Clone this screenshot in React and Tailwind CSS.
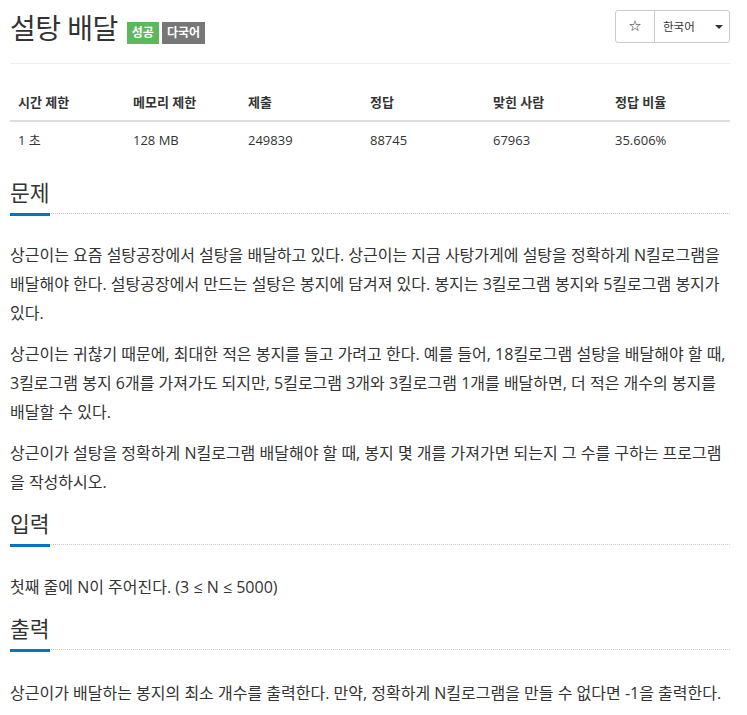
const stats = [
  { label: "시간 제한", value: "1 초" },
  { label: "메모리 제한", value: "128 MB" },
  { label: "제출", value: "249839" },
  { label: "정답", value: "88745" },
  { label: "맞힌 사람", value: "67963" },
  { label: "정답 비율", value: "35.606%" },
];

function Headline({ children }) {
  return (
    <div className="border-b border-dotted border-[#ccc]">
      <h2 className="inline-block text-[21.5px] leading-[30px] pb-[5px] -mb-[3px] border-b-[3px] border-[#0076c0]">
        {children}
      </h2>
    </div>
  );
}

function Lines({ lines }) {
  return (
    <p className="mb-[12px] whitespace-nowrap">
      {lines.map((line, i) => (
        <span key={i}>
          {line}
          {i < lines.length - 1 && <br />}
        </span>
      ))}
    </p>
  );
}

export default function App() {
  return (
    <div className="bg-white min-h-[715px] pl-[10px] pr-[17px] text-[#333] font-['Open_Sans','Noto_Sans_CJK_KR',sans-serif]">
      {/* Page header */}
      <div className="flex justify-between items-start pt-[10px] h-[64px] border-b border-[#eee]">
        <h1 className="flex items-end">
          <span className="text-[28px] leading-[36px] tracking-[-0.5px]">설탕 배달</span>
          <span className="ml-[9px] mb-[2px] h-[22px] px-[5px] flex items-center bg-[#5cb85c] text-white text-[12px] font-bold">
            성공
          </span>
          <span className="ml-[3px] mb-[2px] h-[22px] px-[5px] flex items-center bg-[#777] text-white text-[12px] font-bold">
            다국어
          </span>
        </h1>
        <div className="flex h-[33px] border border-[#ccc] rounded-[3px]">
          <button className="w-[38px] flex items-center justify-center text-[15px] text-[#222] font-['DejaVu_Sans',sans-serif]">
            ☆
          </button>
          <button className="w-[75px] flex items-center border-l border-[#ccc] pl-[8px] text-[11.5px]">
            한국어
            <span className="ml-[20px] w-0 h-0 border-t-[4px] border-t-[#333] border-x-[4px] border-x-transparent" />
          </button>
        </div>
      </div>

      {/* Stats table */}
      <div className="mt-[20px] mb-[20px]">
        <div className="grid grid-cols-[115px_115px_122px_123px_122px_1fr] border-b-2 border-[#ddd]">
          {stats.map((s) => (
            <div key={s.label} className="px-2 py-2 leading-5 text-[13px] font-bold">
              {s.label}
            </div>
          ))}
        </div>
        <div className="grid grid-cols-[115px_115px_122px_123px_122px_1fr]">
          {stats.map((s) => (
            <div key={s.label} className="px-2 py-2 leading-5 text-[13px]">
              {s.value}
            </div>
          ))}
        </div>
      </div>

      {/* 문제 */}
      <section>
        <Headline>문제</Headline>
        <div className="mt-[27px] text-[16px] leading-[29px]">
          <Lines
            lines={[
              "상근이는 요즘 설탕공장에서 설탕을 배달하고 있다. 상근이는 지금 사탕가게에 설탕을 정확하게 N킬로그램을",
              "배달해야 한다. 설탕공장에서 만드는 설탕은 봉지에 담겨져 있다. 봉지는 3킬로그램 봉지와 5킬로그램 봉지가",
              "있다.",
            ]}
          />
          <Lines
            lines={[
              "상근이는 귀찮기 때문에, 최대한 적은 봉지를 들고 가려고 한다. 예를 들어, 18킬로그램 설탕을 배달해야 할 때,",
              "3킬로그램 봉지 6개를 가져가도 되지만, 5킬로그램 3개와 3킬로그램 1개를 배달하면, 더 적은 개수의 봉지를",
              "배달할 수 있다.",
            ]}
          />
          <Lines
            lines={[
              "상근이가 설탕을 정확하게 N킬로그램 배달해야 할 때, 봉지 몇 개를 가져가면 되는지 그 수를 구하는 프로그램",
              "을 작성하시오.",
            ]}
          />
        </div>
      </section>

      {/* 입력 */}
      <section className="mt-[2px]">
        <Headline>입력</Headline>
        <div className="mt-[28px] text-[16px] leading-[29px]">
          <Lines lines={["첫째 줄에 N이 주어진다. (3 ≤ N ≤ 5000)"]} />
        </div>
      </section>

      {/* 출력 */}
      <section className="mt-[2px]">
        <Headline>출력</Headline>
        <div className="mt-[29px] text-[16px] leading-[29px]">
          <Lines
            lines={[
              "상근이가 배달하는 봉지의 최소 개수를 출력한다. 만약, 정확하게 N킬로그램을 만들 수 없다면 -1을 출력한다.",
            ]}
          />
        </div>
      </section>
    </div>
  );
}
